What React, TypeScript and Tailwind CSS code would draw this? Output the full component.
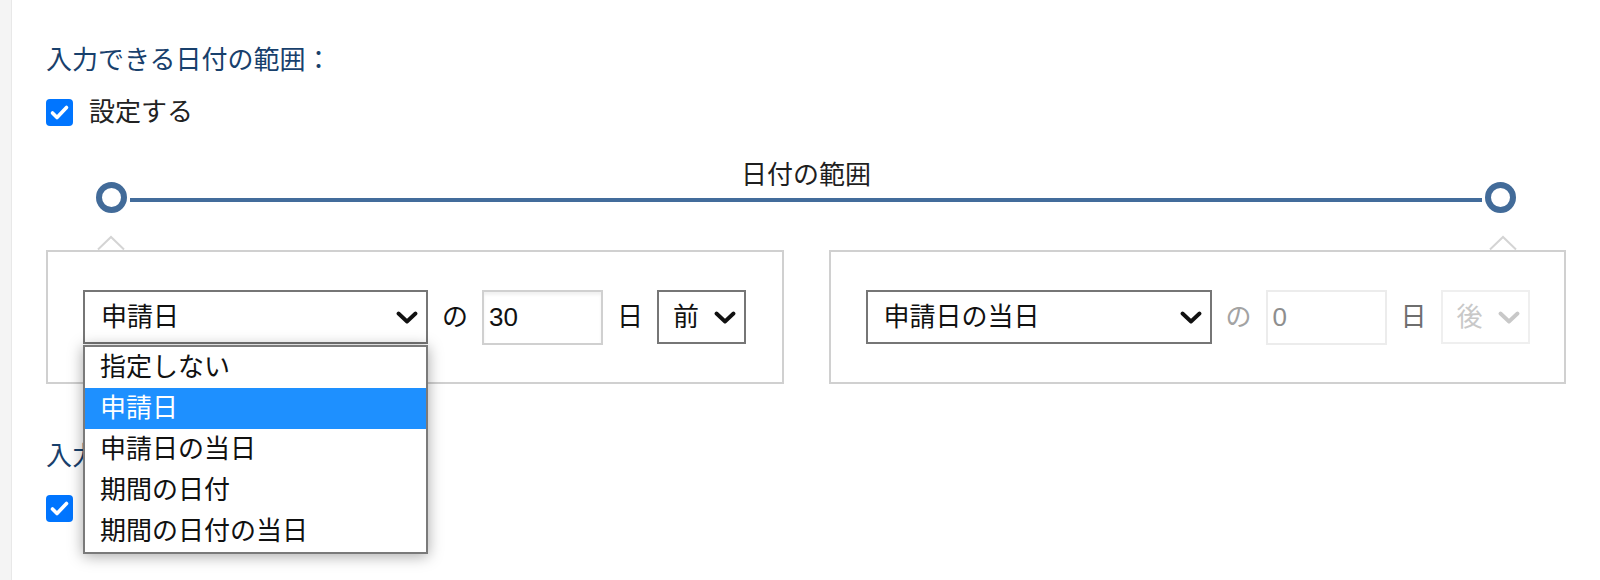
import type { ReactNode } from "react";

const FONT = {
  fontFamily: '"Liberation Sans", "Noto Sans CJK JP", sans-serif',
};

const options = ["指定しない", "申請日", "申請日の当日", "期間の日付", "期間の日付の当日"];

function Chevron({ color = "#111111" }: { color?: string }) {
  return (
    <svg width="22" height="13" viewBox="0 0 22 13" fill="none" className="shrink-0">
      <polyline
        points="2.5,2.5 11,10.5 19.5,2.5"
        stroke={color}
        strokeWidth="3.8"
        strokeLinecap="round"
        strokeLinejoin="round"
      />
    </svg>
  );
}

function Checkbox() {
  return (
    <div className="flex h-[27px] w-[27px] shrink-0 items-center justify-center rounded-[4px] bg-[#0075ff]">
      <svg width="27" height="27" viewBox="0 0 27 27" fill="none">
        <polyline
          points="6.5,14 11,18.5 20.5,8.5"
          stroke="white"
          strokeWidth="3.6"
          strokeLinecap="round"
          strokeLinejoin="round"
        />
      </svg>
    </div>
  );
}

function Caret({ side }: { side: "left" | "right" }) {
  return (
    <svg
      width="28"
      height="15"
      viewBox="0 0 28 15"
      fill="none"
      className={`absolute top-[-17px] ${side === "left" ? "left-[49px]" : "right-[47px]"}`}
    >
      <polyline points="1,14.5 14,2 27,14.5" stroke="#d4d4d4" strokeWidth="2" fill="white" />
    </svg>
  );
}

function Section({ title, children }: { title: string; children?: ReactNode }) {
  return (
    <div>
      <div className="h-[36px] text-[26px] leading-[36px] text-[#18406c]">{title}</div>
      <div className="mt-[16px] flex h-[36px] items-center gap-[16px]">
        <Checkbox />
        <span className="text-[26px] leading-[36px] text-[#222222]">設定する</span>
      </div>
      {children}
    </div>
  );
}

function Handle() {
  return (
    <div className="h-[31px] w-[31px] shrink-0 rounded-full border-[6px] border-[#426b99] bg-white" />
  );
}

export default function App() {
  return (
    <main className="flex h-[580px] w-[1600px] overflow-hidden bg-white" style={FONT}>
      <div className="w-[12px] shrink-0 border-r border-[#e8e8e8] bg-[#f4f4f4]" />

      <div className="w-[1554px] shrink-0 pl-[34px] pt-[42px]">
        <Section title="入力できる日付の範囲：">
          <div className="mt-[30px] h-[30px] text-center text-[26px] leading-[30px] text-[#1f1f1f]">
            日付の範囲
          </div>

          <div className="-mt-[8px] flex items-center px-[50px]">
            <Handle />
            <div className="mx-[3px] mt-[5px] h-[4px] flex-1 bg-[#436c9b]" />
            <Handle />
          </div>

          <div className="mt-[37px] grid grid-cols-2 gap-[45px]">
            {/* start */}
            <div className="relative flex h-[134px] items-center gap-[14px] border-2 border-[#d0d0d0] px-[35px] text-[26px] text-[#111111]">
              <Caret side="left" />

              <div className="relative shrink-0">
                <div className="flex h-[54px] w-[345px] items-center justify-between border-2 border-[#767676] bg-white pl-[16px] pr-[8px]">
                  <span>申請日</span>
                  <Chevron />
                </div>

                <ul className="absolute left-0 top-[55px] z-10 w-[345px] border-2 border-[#7a7a7a] bg-white shadow-[0_2px_14px_rgba(0,0,0,0.35)]">
                  {options.map((o) => (
                    <li
                      key={o}
                      className={`h-[41px] pl-[15px] leading-[41px] ${
                        o === "申請日" ? "bg-[#1e90ff] text-white" : "text-[#111111]"
                      }`}
                    >
                      {o}
                    </li>
                  ))}
                </ul>
              </div>

              <span className="w-[26px] shrink-0">の</span>
              <div className="flex h-[55px] w-[121px] shrink-0 items-center border-2 border-[#d0d0d0] pl-[5px] shadow-[inset_0_3px_3px_rgba(0,0,0,0.06)]">
                30
              </div>
              <span className="w-[26px] shrink-0">日</span>
              <div className="flex h-[54px] w-[89px] shrink-0 items-center justify-between border-2 border-[#767676] pl-[14px] pr-[8px]">
                <span>前</span>
                <Chevron />
              </div>
            </div>

            {/* end */}
            <div className="relative flex h-[134px] items-center gap-[14px] border-2 border-[#d0d0d0] px-[35px] text-[26px]">
              <Caret side="right" />

              <div className="flex h-[54px] w-[346px] shrink-0 items-center justify-between border-2 border-[#767676] bg-white pl-[16px] pr-[8px] text-[#111111]">
                <span>申請日の当日</span>
                <Chevron />
              </div>

              <span className="w-[26px] shrink-0 text-[#a3a3a3]">の</span>
              <div className="flex h-[55px] w-[121px] shrink-0 items-center border-2 border-[#ececec] pl-[5px] text-[#8e8e8e]">
                0
              </div>
              <span className="w-[26px] shrink-0 text-[#6e6e6e]">日</span>
              <div className="flex h-[54px] w-[89px] shrink-0 items-center justify-between border-2 border-[#efefef] pl-[14px] pr-[8px] text-[#c8c8c8]">
                <span>後</span>
                <Chevron color="#c8c8c8" />
              </div>
            </div>
          </div>
        </Section>

        <div className="mt-[54px]">
          <Section title="入力できる時刻の範囲：" />
        </div>
      </div>
    </main>
  );
}
